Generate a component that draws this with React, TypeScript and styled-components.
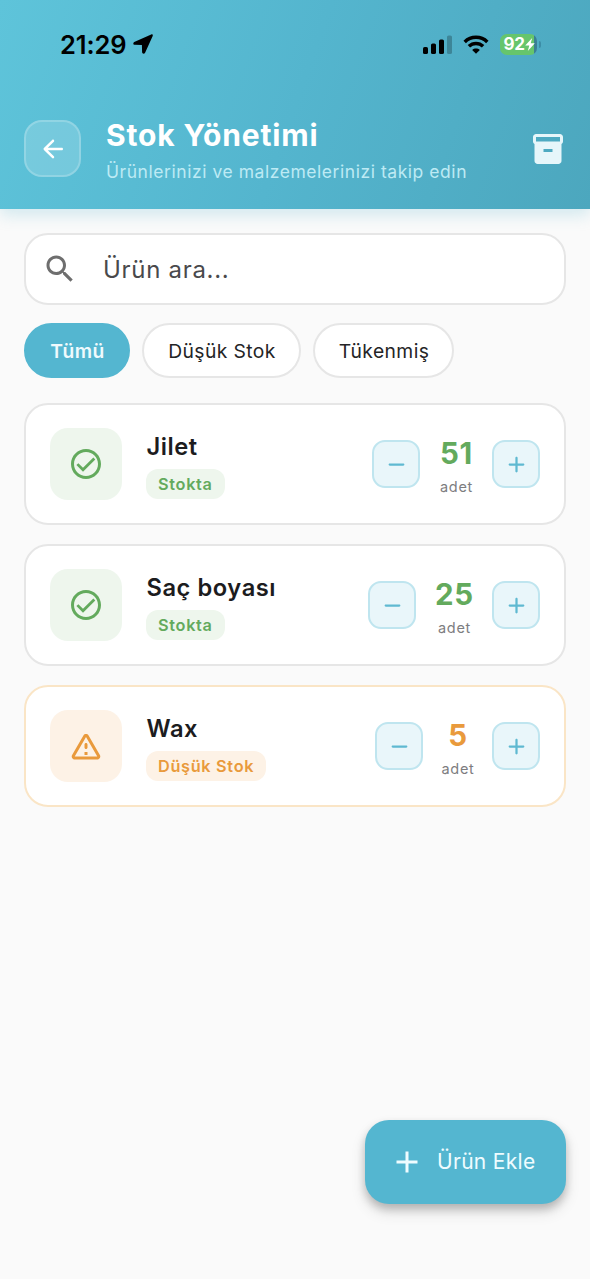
import React, { useState } from "react";
import styled, { createGlobalStyle } from "styled-components";

const GlobalStyle = createGlobalStyle`
  *, *::before, *::after { box-sizing: border-box; }
  body { margin: 0; background: #fafafa; }
  button, input { font: inherit; letter-spacing: inherit; }
`;

const Screen = styled.div`
  position: relative;
  width: 590px;
  height: 1279px;
  overflow: hidden;
  background: #fafafa;
  color: #1c1c1e;
  font-family: Inter, "Noto Sans", sans-serif;
`;

const Header = styled.header`
  height: 209px;
  background: linear-gradient(109.5deg, #5ec4da 0%, #54b5ce 50%, #4ca7be 100%);
  box-shadow: 0 6px 15px rgba(84, 181, 206, 0.24);
`;

const StatusBar = styled.div`
  display: flex;
  align-items: center;
  justify-content: space-between;
  height: 88px;
  padding: 0 53px 0 60px;
  color: #000;
`;

const Clock = styled.div`
  display: flex;
  align-items: center;
  gap: 6px;
  font-size: 25.5px;
  font-weight: 600;
  letter-spacing: -0.1px;
`;

const Indicators = styled.div`
  display: flex;
  align-items: center;
  svg { display: block; flex: none; }
`;

const Battery = styled.div`
  position: relative;
  display: flex;
  align-items: center;
  width: 37px;
  height: 21px;
  margin-left: 11px;
  padding-left: 3.5px;
  border-radius: 7px;
  background: linear-gradient(90deg, #66c56c 0 34.5px, #3b7f93 34.5px);
  color: #fff;
  font-size: 17px;
  font-weight: 700;
  letter-spacing: -0.2px;
  &::after {
    content: "";
    position: absolute;
    right: -4px;
    top: 7px;
    width: 2px;
    height: 7px;
    border-radius: 0 3px 3px 0;
    background: #3c8da6;
  }
`;

const AppBar = styled.div`
  display: flex;
  align-items: center;
  height: 121px;
  padding: 0 24px;
`;

const BackButton = styled.button`
  display: grid;
  place-items: center;
  width: 57px;
  height: 57px;
  padding: 0;
  border: 2px solid rgba(255, 255, 255, 0.2);
  border-radius: 18px;
  background: rgba(255, 255, 255, 0.17);
  color: #fff;
`;

const Heading = styled.div`
  flex: 1;
  margin: 4px 0 0 25px;
`;

const Title = styled.h1`
  margin: 0;
  color: #fff;
  font-size: 30px;
  font-weight: 700;
  line-height: 36px;
  letter-spacing: 0.85px;
`;

const Subtitle = styled.p`
  margin: 6px 0 0;
  color: #bdeaf4;
  font-size: 17.5px;
  line-height: 25px;
  letter-spacing: 0.55px;
`;

const BoxIcon = styled.div`
  display: flex;
  color: #e6f6fa;
`;

const Content = styled.main`
  padding: 24px;
`;

const Search = styled.label`
  display: flex;
  align-items: center;
  height: 72px;
  padding: 0 16px;
  border: 2px solid #e6e6e6;
  border-radius: 24px;
  background: #fff;
  color: #6e6e6e;
`;

const SearchInput = styled.input`
  flex: 1;
  min-width: 0;
  margin-left: 25px;
  padding: 0;
  border: 0;
  outline: 0;
  background: none;
  color: #49494b;
  font-size: 24px;
  letter-spacing: 0.7px;
  &::placeholder { color: #49494b; opacity: 1; }
`;

const Chips = styled.div`
  display: flex;
  gap: 12px;
  margin: 18px 0 25px;
`;

const Chip = styled.button<{ $active: boolean; $width: number }>`
  width: ${(p) => p.$width}px;
  height: 55px;
  padding: 0 0 0 1px;
  border: 2px solid ${(p) => (p.$active ? "#54b6d0" : "#e6e6e6")};
  border-radius: 28px;
  background: ${(p) => (p.$active ? "#54b6d0" : "#fff")};
  color: ${(p) => (p.$active ? "#effafd" : "#242426")};
  font-size: 19.3px;
  font-weight: ${(p) => (p.$active ? 600 : 400)};
  letter-spacing: 0.4px;
`;

const List = styled.div`
  display: flex;
  flex-direction: column;
  gap: 19px;
`;

type Tone = "ok" | "low";
const tones = {
  ok: { ink: "#63aa5d", soft: "#eef6ed", border: "#e6e6e6" },
  low: { ink: "#e99a3c", soft: "#fdf2e6", border: "#fae5c6" },
};

const Card = styled.article<{ $tone: Tone }>`
  display: flex;
  align-items: center;
  height: 122px;
  padding: 0 24px;
  border: 2px solid ${(p) => tones[p.$tone].border};
  border-radius: 24px;
  background: #fff;
`;

const StatusTile = styled.div<{ $tone: Tone }>`
  display: grid;
  place-items: center;
  width: 72px;
  height: 72px;
  border-radius: 18px;
  background: ${(p) => tones[p.$tone].soft};
  color: ${(p) => tones[p.$tone].ink};
`;

const Info = styled.div`
  flex: 1;
  margin: 2px 0 0 24px;
`;

const Name = styled.div`
  padding-left: 0.5px;
  font-size: 23.7px;
  font-weight: 600;
  line-height: 30px;
  letter-spacing: 0.55px;
`;

const Badge = styled.span<{ $tone: Tone }>`
  display: block;
  width: fit-content;
  height: 30px;
  margin-top: 7px;
  padding: 0 12px;
  border-radius: 12px;
  background: ${(p) => tones[p.$tone].soft};
  color: ${(p) => tones[p.$tone].ink};
  font-size: 16.3px;
  font-weight: 600;
  line-height: 31px;
  letter-spacing: 0.68px;
`;

const StepButton = styled.button`
  display: grid;
  place-items: center;
  width: 48px;
  height: 48px;
  padding: 0;
  border: 2px solid #bfe5ef;
  border-radius: 13px;
  background: #e9f6fa;
  color: #5fb9d1;
`;

const Quantity = styled.div<{ $width: number }>`
  display: flex;
  flex-direction: column;
  align-items: center;
  width: ${(p) => p.$width}px;
  padding: 6px 0 0 1px;
`;

const Amount = styled.div<{ $tone: Tone }>`
  color: ${(p) => tones[p.$tone].ink};
  font-size: 29.5px;
  font-weight: 700;
  line-height: 36px;
  letter-spacing: 0.75px;
`;

const Unit = styled.div`
  margin-top: 4px;
  color: #7d7d80;
  font-size: 14.5px;
  line-height: 24px;
  letter-spacing: 0.65px;
`;

const AddButton = styled.button`
  position: absolute;
  right: 24px;
  bottom: 75px;
  display: flex;
  align-items: center;
  gap: 12px;
  width: 201px;
  height: 84px;
  padding: 0 0 1px 24px;
  border: 0;
  border-radius: 24px;
  background: #54b6d0;
  color: #effcff;
  font-size: 21px;
  letter-spacing: 0.3px;
  box-shadow: 0 5px 8px rgba(0, 0, 0, 0.2), 0 8px 15px rgba(0, 0, 0, 0.12);
`;

const paths = {
  back: "M19 11H7.83l4.88-4.88c.39-.39.39-1.03 0-1.42-.39-.39-1.02-.39-1.41 0l-6.59 6.59c-.39.39-.39 1.02 0 1.41l6.59 6.59c.39.39 1.02.39 1.41 0 .39-.39.39-1.02 0-1.41L7.83 13H19c.55 0 1-.45 1-1s-.45-1-1-1z",
  box: "M20 2H4c-1 0-2 .9-2 2v3.01c0 .72.43 1.34 1 1.69V20c0 1.1 1.1 2 2 2h14c.9 0 2-.9 2-2V8.7c.57-.35 1-.97 1-1.69V4c0-1.1-1-2-2-2zm-5 12H9v-2h6v2zm5-7H4V4h16v3z",
  search: "M15.5 14h-.79l-.28-.27C15.41 12.59 16 11.11 16 9.5 16 5.91 13.09 3 9.5 3S3 5.91 3 9.5 5.91 16 9.5 16c1.61 0 3.09-.59 4.23-1.57l.27.28v.79l5 4.99L20.49 19l-4.99-5zm-6 0C7.01 14 5 11.99 5 9.5S7.01 5 9.5 5 14 7.01 14 9.5 11.99 14 9.5 14z",
  check: "M12 2C6.48 2 2 6.48 2 12s4.48 10 10 10 10-4.48 10-10S17.52 2 12 2zm0 18c-4.41 0-8-3.59-8-8s3.59-8 8-8 8 3.59 8 8-3.59 8-8 8zm4.9-12.3L10 14.5l-3.1-3.05L5.6 12.7l4.4 4.4 8.2-8.1z",
  warning: "M12 5.99L19.53 19H4.47L12 5.99M2.74 18c-.77 1.33.19 3 1.73 3h15.06c1.54 0 2.5-1.67 1.73-3L13.73 4.99c-.77-1.33-2.69-1.33-3.46 0L2.74 18zM11 11v2c0 .55.45 1 1 1s1-.45 1-1v-2c0-.55-.45-1-1-1s-1 .45-1 1zm0 5h2v2h-2z",
  minus: "M18 13H6c-.55 0-1-.45-1-1s.45-1 1-1h12c.55 0 1 .45 1 1s-.45 1-1 1z",
  plus: "M18 13h-5v5c0 .55-.45 1-1 1s-1-.45-1-1v-5H6c-.55 0-1-.45-1-1s.45-1 1-1h5V6c0-.55.45-1 1-1s1 .45 1 1v5h5c.55 0 1 .45 1 1s-.45 1-1 1z",
  add: "M19 13h-6v6h-2v-6H5v-2h6V5h2v6h6v2z",
};

const Icon = ({ name, size }: { name: keyof typeof paths; size: number }) => (
  <svg width={size} height={size} viewBox="0 0 24 24" fill="currentColor">
    <path d={paths[name]} />
  </svg>
);

const WifiIcon = styled.svg`
  margin-left: 11px;
`;

const filters = [
  { label: "Tümü", width: 106 },
  { label: "Düşük Stok", width: 159 },
  { label: "Tükenmiş", width: 141 },
];

const initialItems: { name: string; count: number; tone: Tone; width: number }[] = [
  { name: "Jilet", count: 51, tone: "ok", width: 72 },
  { name: "Saç boyası", count: 25, tone: "ok", width: 76 },
  { name: "Wax", count: 5, tone: "low", width: 69 },
];

export default function App() {
  const [active, setActive] = useState(0);
  const [items, setItems] = useState(initialItems);
  const change = (index: number, by: number) =>
    setItems(items.map((it, i) => (i === index ? { ...it, count: Math.max(0, it.count + by) } : it)));

  return (
    <Screen>
      <GlobalStyle />
      <Header>
        <StatusBar>
          <Clock>
            21:29
            <svg width="20" height="20" viewBox="0 0 20 20">
              <path d="M18.2 0.4 1.2 8C-.2 8.7.1 10.8 1.6 10.8L8.9 10.9 9.1 18.1C9.1 20 11.4 20.3 12.1 18.7L19.7 1.9C20.1.7 19.3 0 18.2.4Z" />
            </svg>
          </Clock>
          <Indicators>
            <svg width="29" height="19" viewBox="0 0 29 19">
              <rect x="0" y="12" width="5" height="7" rx="1.6" />
              <rect x="8" y="8.5" width="5" height="10.5" rx="1.6" />
              <rect x="16" y="4.5" width="5" height="14.5" rx="1.6" />
              <rect x="24" y="0.5" width="5" height="18.5" rx="1.6" opacity="0.24" />
            </svg>
            <WifiIcon width="26" height="19" viewBox="0 0 26 19">
              <g fill="none" stroke="#000" strokeWidth="3.5">
                <path d="M1.7 6.9C8 .8 18 .8 24.3 6.9" />
                <path d="M5.9 11.3C10 7.4 16 7.4 20.1 11.3" />
              </g>
              <path d="M13 18.8 9.2 15C11.3 13.1 14.7 13.1 16.8 15Z" />
            </WifiIcon>
            <Battery>
              92
              <svg width="10" height="13" viewBox="0 0 10 13" fill="#fff">
                <path d="M7.2 0 .2 7.6H4.3L2.8 13 9.8 5.3H5.7Z" />
              </svg>
            </Battery>
          </Indicators>
        </StatusBar>
        <AppBar>
          <BackButton aria-label="Geri">
            <Icon name="back" size={30} />
          </BackButton>
          <Heading>
            <Title>Stok Yönetimi</Title>
            <Subtitle>Ürünlerinizi ve malzemelerinizi takip edin</Subtitle>
          </Heading>
          <BoxIcon>
            <Icon name="box" size={36} />
          </BoxIcon>
        </AppBar>
      </Header>

      <Content>
        <Search>
          <Icon name="search" size={36} />
          <SearchInput placeholder="Ürün ara..." />
        </Search>
        <Chips>
          {filters.map((f, i) => (
            <Chip key={f.label} $active={i === active} $width={f.width} onClick={() => setActive(i)}>
              {f.label}
            </Chip>
          ))}
        </Chips>
        <List>
          {items.map((item, i) => (
            <Card key={item.name} $tone={item.tone}>
              <StatusTile $tone={item.tone}>
                <Icon name={item.tone === "ok" ? "check" : "warning"} size={36} />
              </StatusTile>
              <Info>
                <Name>{item.name}</Name>
                <Badge $tone={item.tone}>{item.tone === "ok" ? "Stokta" : "Düşük Stok"}</Badge>
              </Info>
              <StepButton aria-label="Azalt" onClick={() => change(i, -1)}>
                <Icon name="minus" size={27} />
              </StepButton>
              <Quantity $width={item.width}>
                <Amount $tone={item.tone}>{item.count}</Amount>
                <Unit>adet</Unit>
              </Quantity>
              <StepButton aria-label="Artır" onClick={() => change(i, 1)}>
                <Icon name="plus" size={27} />
              </StepButton>
            </Card>
          ))}
        </List>
      </Content>

      <AddButton>
        <Icon name="add" size={36} />
        Ürün Ekle
      </AddButton>
    </Screen>
  );
}
